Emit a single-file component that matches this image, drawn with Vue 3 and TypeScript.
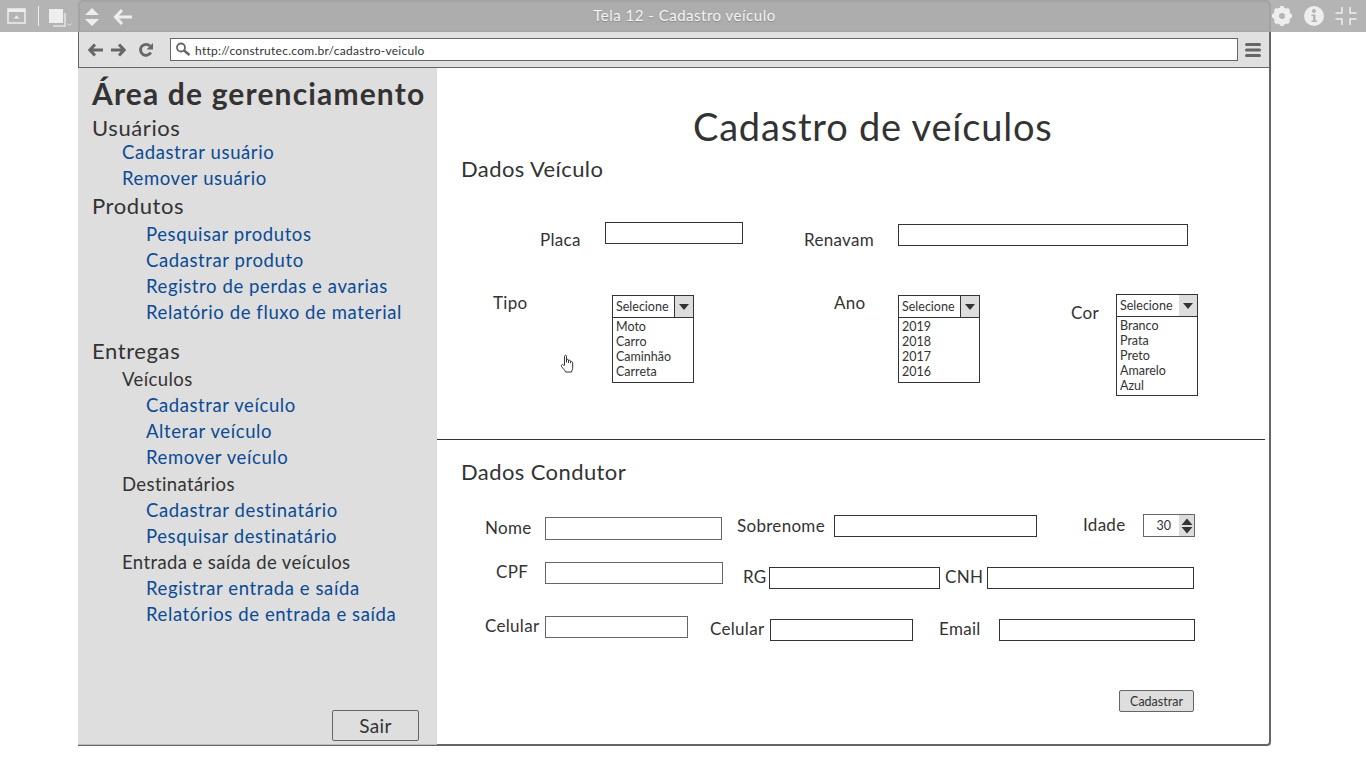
<script setup lang="ts">
const usuarios = ['Cadastrar usuário', 'Remover usuário']
const produtos = ['Pesquisar produtos', 'Cadastrar produto', 'Registro de perdas e avarias', 'Relatório de fluxo de material']
const veiculos = ['Cadastrar veículo', 'Alterar veículo', 'Remover veículo']
const destinatarios = ['Cadastrar destinatário', 'Pesquisar destinatário']
const entradas = ['Registrar entrada e saída', 'Relatórios de entrada e saída']
const tipos = ['Moto', 'Carro', 'Caminhão', 'Carreta']
const anos = ['2019', '2018', '2017', '2016']
const cores = ['Branco', 'Prata', 'Preto', 'Amarelo', 'Azul']
</script>

<template>
  <div class="screen">
    <header class="topbar">
      <div class="tools">
        <svg class="ic-win" width="20" height="16" viewBox="0 0 20 16">
          <rect x="1" y="1" width="17" height="14" fill="none" stroke="#eee" stroke-width="1.5" />
          <rect x="1" y="1" width="17" height="3" fill="#eee" />
          <path d="M6.500 10.500 9.500 7.500 12.500 10.500Z" fill="#eee" />
        </svg>
        <span class="sep" />
        <svg class="ic-layers" width="26" height="20" viewBox="0 0 26 20">
          <rect x="1" y="1" width="14" height="14" fill="#eee" />
          <path d="M17 5V18H5" fill="none" stroke="#e4e4e4" stroke-width="1.500" />
          <path d="M19.500 15.500 21.500 17.500 23.500 15.500" fill="none" stroke="#e4e4e4" stroke-width="1" />
        </svg>
      </div>
      <div class="titlebar">
        <svg class="ic-updown" width="16" height="20" viewBox="0 0 16 20">
          <path d="M8 1 15 8H1ZM8 19 1 12H15Z" fill="#eee" />
        </svg>
        <svg class="ic-back" width="20" height="18" viewBox="0 0 20 18">
          <path d="M9 2 2.500 9 9 16M3 9H19" fill="none" stroke="#eee" stroke-width="3" />
        </svg>
        <span class="wintitle">Tela 12 - Cadastro veículo</span>
      </div>
      <div class="tools-right">
        <svg width="22" height="22" viewBox="0 0 22 22">
          <circle cx="11" cy="11" r="6.500" fill="none" stroke="#eee" stroke-width="4.500" />
          <path d="M11 1V21M1 11H21M4 4 18 18M18 4 4 18" stroke="#eee" stroke-width="3.500" />
          <circle cx="11" cy="11" r="3" fill="#b4b4b4" />
        </svg>
        <svg width="22" height="22" viewBox="0 0 22 22">
          <circle cx="11" cy="11" r="10" fill="#eee" />
          <circle cx="11" cy="6" r="2" fill="#b4b4b4" />
          <path d="M8.500 9.500H12.500V15.500H14V17H8.500V15.500H10V11H8.500Z" fill="#b4b4b4" />
        </svg>
        <svg width="22" height="20" viewBox="0 0 22 20">
          <path d="M7 1V7H0.500M15 1V7H21.500M7 19V13H0.500M15 19V13H21.500" fill="none" stroke="#eee" stroke-width="1.500" />
        </svg>
      </div>
    </header>

    <div class="window">
      <div class="browserbar">
        <svg class="ic-nav" width="16" height="14" viewBox="0 0 16 14">
          <path d="M7 1.500 1.800 7 7 12.500M2.500 7H15" fill="none" stroke="#666" stroke-width="3" />
        </svg>
        <svg class="ic-nav fwd" width="16" height="14" viewBox="0 0 16 14">
          <path d="M9 1.500 14.200 7 9 12.500M13.500 7H1" fill="none" stroke="#666" stroke-width="3" />
        </svg>
        <svg class="ic-reload" width="16" height="16" viewBox="0 0 16 16">
          <path d="M12.800 10.500A5.500 5.500 0 1 1 12 4" fill="none" stroke="#666" stroke-width="2.800" />
          <path d="M15 1V7.500H8.500Z" fill="#666" />
        </svg>
        <div class="urlbox">
          <svg width="16" height="15" viewBox="0 0 16 15">
            <circle cx="6" cy="5.500" r="4" fill="none" stroke="#666" stroke-width="1.800" />
            <path d="M9 8.500 14.500 13" stroke="#666" stroke-width="2.500" />
          </svg>
          <span class="url">http://construtec.com.br/cadastro-veiculo</span>
        </div>
        <svg class="ic-menu" width="16" height="16" viewBox="0 0 16 16">
          <path d="M1.500 2.500H14.500M1.500 8H14.500M1.500 13.500H14.500" stroke="#666" stroke-width="3" stroke-linecap="round" />
        </svg>
      </div>

      <div class="content">
        <aside class="sidebar">
          <h2 class="side-title">Área de gerenciamento</h2>
          <div class="group usr">Usuários</div>
          <a v-for="u in usuarios" :key="u" class="link lvl1">{{ u }}</a>
          <div class="group prod">Produtos</div>
          <a v-for="p in produtos" :key="p" class="link lvl2">{{ p }}</a>
          <div class="group ent">Entregas</div>
          <div class="sub first">Veículos</div>
          <a v-for="v in veiculos" :key="v" class="link lvl2">{{ v }}</a>
          <div class="sub">Destinatários</div>
          <a v-for="d in destinatarios" :key="d" class="link lvl2">{{ d }}</a>
          <div class="sub last">Entrada e saída de veículos</div>
          <a v-for="e in entradas" :key="e" class="link lvl2">{{ e }}</a>
          <button class="sair">Sair</button>
        </aside>

        <main class="main">
          <h1 class="page-title">Cadastro de veículos</h1>
          <h3 class="section veic">Dados Veículo</h3>

          <div class="row r1">
            <span class="lbl placa">Placa</span>
            <span class="inp placa-i" />
            <span class="lbl renavam">Renavam</span>
            <span class="inp renavam-i" />
          </div>

          <div class="row r2">
            <span class="lbl tipo">Tipo</span>
            <div class="sel s-tipo">
              <div class="sel-head"><span>Selecione</span><i class="sel-btn" /></div>
              <div v-for="t in tipos" :key="t" class="opt">{{ t }}</div>
            </div>
            <span class="lbl ano">Ano</span>
            <div class="sel s-ano">
              <div class="sel-head"><span>Selecione</span><i class="sel-btn" /></div>
              <div v-for="a in anos" :key="a" class="opt">{{ a }}</div>
            </div>
            <span class="lbl cor">Cor</span>
            <div class="sel s-cor">
              <div class="sel-head"><span>Selecione</span><i class="sel-btn flat" /></div>
              <div v-for="c in cores" :key="c" class="opt">{{ c }}</div>
            </div>
          </div>

          <hr class="divider" />
          <h3 class="section cond">Dados Condutor</h3>

          <div class="row r3">
            <span class="lbl nome">Nome</span>
            <span class="inp soft nome-i" />
            <span class="lbl sobrenome">Sobrenome</span>
            <span class="inp sobrenome-i" />
            <span class="lbl idade">Idade</span>
            <div class="spin"><span class="spin-val">30</span>
              <i class="spin-btn">
                <svg width="12" height="18" viewBox="0 0 12 18"><path d="M6 1.500 11.500 8H.5ZM6 16.500 .5 10H11.500Z" fill="#333" /></svg>
              </i>
            </div>
          </div>

          <div class="row r4">
            <span class="lbl cpf">CPF</span>
            <span class="inp soft cpf-i" />
            <span class="lbl rg">RG</span>
            <span class="inp rg-i" />
            <span class="lbl cnh">CNH</span>
            <span class="inp cnh-i" />
          </div>

          <div class="row r5">
            <span class="lbl cel1">Celular</span>
            <span class="inp soft cel1-i" />
            <span class="lbl cel2">Celular</span>
            <span class="inp cel2-i" />
            <span class="lbl email">Email</span>
            <span class="inp email-i" />
          </div>

          <div class="actions"><button class="cadastrar">Cadastrar</button></div>

          <svg class="hand" width="16" height="20" viewBox="0 0 16 20">
            <path d="M4.500 11V2.500C4.500 .8 6.500 .8 6.500 2.500V8.500M6.500 8V6.500C6.500 5 8.500 5 8.500 6.500V9M8.500 8V7C8.500 5.800 10.500 5.800 10.500 7.200V9.200M10.500 8.500C10.500 7 12.700 7.200 12.700 8.700V13C12.700 15.500 12 16.500 11.500 18H5.500C4.800 16 3 14.500 1.500 12.500 .7 11 2.500 9.800 3.500 11L4.500 12" fill="#fff" stroke="#333" stroke-width="1" />
          </svg>
        </main>
      </div>
    </div>
  </div>
</template>

<style>
html, body { margin: 0; background: #fff; }
</style>

<style scoped>
.screen {
  position: relative;
  width: 1366px;
  height: 768px;
  overflow: hidden;
  background: #fff;
  font-family: "Lato", "Noto Sans", sans-serif;
  color: #333;
}

/* top chrome */
.topbar {
  display: flex;
  height: 32px;
  background: #b4b4b4;
}
.tools {
  display: flex;
  align-items: center;
  width: 78px;
  flex: none;
  box-sizing: border-box;
  padding-left: 7px;
}
.sep { width: 1px; height: 20px; margin: 0 9px 0 11px; background: #eee; flex: none; }
.ic-layers { flex: none; margin-top: 3px; }
.titlebar {
  position: relative;
  display: flex;
  align-items: center;
  width: 1193px;
  flex: none;
  box-sizing: border-box;
  padding-left: 4px;
  background: #adadad;
  border-top: 2px solid #a4a4a4;
  border-left: 2px solid #a4a4a4;
  border-right: 2px solid #a4a4a4;
  border-bottom: 1px solid #a4a4a4;
  border-radius: 5px 5px 0 0;
}
.ic-back { margin-left: 13px; }
.wintitle {
  position: absolute;
  left: 20px;
  right: 0;
  top: 4px;
  text-align: center;
  color: #f4f4f4;
  font-size: 15px;
  letter-spacing: .5px;
  text-shadow: 0 1px 1px #888;
}
.tools-right {
  display: flex;
  align-items: center;
  gap: 10px;
}

/* browser */
.window {
  width: 1193px;
  height: 714px;
  margin-left: 78px;
  box-sizing: border-box;
  border-left: 1px solid #666;
  border-right: 2px solid #666;
  border-bottom: 2px solid #666;
  border-radius: 0 0 4px 0;
}
.browserbar {
  display: flex;
  align-items: center;
  height: 36px;
  box-sizing: border-box;
  padding-left: 9px;
  background: #e0e0e0;
  border-bottom: 1px solid #666;
}
.ic-nav.fwd { margin-left: 6px; }
.ic-reload { margin-left: 12px; }
.urlbox {
  display: flex;
  align-items: center;
  gap: 4px;
  width: 1068px;
  height: 23px;
  margin-left: 16px;
  box-sizing: border-box;
  padding-left: 4px;
  background: #fff;
  border: 1px solid #666;
}
.url { font-size: 12px; letter-spacing: .27px; margin-top: 1px; color: #333; }
.ic-menu { margin-left: 7px; }

.content { display: flex; height: 676px; margin-left: -1px; }

/* sidebar */
.sidebar {
  position: relative;
  width: 359px;
  flex: none;
  box-sizing: border-box;
  padding: 7px 0 0 14px;
  background: #dedede;
  border-bottom: 1px solid #bbb;
  margin-bottom: -1px;
}
.side-title {
  margin: 0;
  font-size: 30px;
  line-height: 36px;
  font-weight: 700;
  letter-spacing: 1.15px;
  color: #333;
  white-space: nowrap;
}
.group { font-size: 22px; line-height: 28px; letter-spacing: .6px; }
.group.usr { margin: 3px 0 -3px; }
.group.prod { margin: 1px 0 1px; }
.group.ent { margin-top: 12px; }
.link {
  display: block;
  font-size: 18.500px;
  line-height: 26px;
  letter-spacing: .6px;
  color: #0b4a94;
  white-space: nowrap;
}
.lvl1 { padding-left: 30px; }
.lvl2 { padding-left: 54px; }
.sub { font-size: 18.500px; line-height: 26px; letter-spacing: .4px; padding-left: 30px; margin-top: 1px; }
.sub.first { margin-top: 1px; }
.sub.last { margin-top: 0; }
.sair {
  position: absolute;
  right: 18px;
  bottom: 3px;
  width: 87px;
  height: 31px;
  background: #dedede;
  border: 1px solid #666;
  border-radius: 2px;
  font: 19px "Lato", sans-serif;
  letter-spacing: .4px;
  color: #333;
}

/* main */
.main { position: relative; flex: 1; min-width: 0; }
.page-title {
  margin: 35px 0 0 256px;
  font-size: 38px;
  line-height: 46px;
  font-weight: 400;
  letter-spacing: .8px;
  white-space: nowrap;
  color: #333;
}
.section {
  margin: 0 0 0 24px;
  font-size: 22px;
  line-height: 28px;
  font-weight: 400;
  letter-spacing: .4px;
  color: #333;
}
.section.veic { margin-top: 6px; }
.section.cond { margin-top: 18px; }
.row { display: flex; align-items: flex-start; }
.lbl { font-size: 17px; line-height: 20px; letter-spacing: .3px; white-space: nowrap; flex: none; }
.inp {
  display: block;
  flex: none;
  height: 22px;
  box-sizing: border-box;
  background: #fff;
  border: 1px solid #333;
}
.inp.soft { border-color: #666; }

.r1 { height: 72px; margin-top: 39px; }
.placa { width: 65px; margin: 8px 0 0 103px; }
.placa-i { width: 138px; }
.renavam { width: 94px; margin: 8px 0 0 61px; }
.renavam-i { width: 290px; margin-top: 2px; }

.r2 { height: 145px; }
.tipo { width: 119px; margin: -1px 0 0 56px; }
.ano { width: 64px; margin: -1px 0 0 140px; }
.cor { width: 45px; margin: 9px 0 0 91px; }
.sel {
  flex: none;
  width: 82px;
  box-sizing: border-box;
  background: #fff;
  border: 1px solid #333;
  font-size: 12.500px;
  line-height: 15px;
  padding-bottom: 3px;
  margin-top: 1px;
}
.s-cor { margin-top: 0; padding-bottom: 2px; }
.sel-head {
  display: flex;
  justify-content: space-between;
  align-items: center;
  height: 21px;
  margin-bottom: 1px;
  padding-left: 3px;
  border-bottom: 1px solid #333;
}
.sel-btn {
  position: relative;
  width: 18px;
  height: 21px;
  background: #ddd;
  border-left: 1px solid #333;
}
.sel-btn.flat { border-left: 0; }
.sel-btn::after {
  content: "";
  position: absolute;
  left: 4px;
  top: 8px;
  border: 5px solid transparent;
  border-top: 6px solid #333;
  border-bottom: 0;
}
.opt { padding-left: 3px; }

.divider { margin: 0 4px 0 0; border: 0; border-top: 1px solid #333; }

.r3 { height: 48px; margin-top: 28px; }
.nome { width: 60px; margin: 4px 0 0 48px; }
.nome-i { width: 177px; margin-top: 3px; height: 23px; }
.sobrenome { width: 97px; margin: 2px 0 0 15px; }
.sobrenome-i { width: 203px; margin-top: 1px; }
.idade { width: 60px; margin: 1px 0 0 46px; }
.spin {
  display: flex;
  justify-content: flex-end;
  align-items: center;
  width: 52px;
  height: 23px;
  box-sizing: border-box;
  border: 1px solid #666;
  font-size: 12.500px;
}
.spin-val { margin-right: 8px; }
.spin-btn {
  display: flex;
  align-items: center;
  justify-content: center;
  width: 15px;
  height: 21px;
  background: #ddd;
}

.r4 { height: 54px; }
.cpf { width: 49px; margin: 0 0 0 59px; }
.cpf-i { width: 178px; }
.rg { width: 26px; margin: 5px 0 0 20px; }
.rg-i { width: 171px; margin-top: 5px; }
.cnh { width: 42px; margin: 5px 0 0 5px; }
.cnh-i { width: 207px; margin-top: 5px; }

.r5 { height: 74px; }
.cel1 { width: 60px; margin: 0 0 0 48px; }
.cel1-i { width: 143px; }
.cel2 { width: 60px; margin: 3px 0 0 22px; }
.cel2-i { width: 143px; margin-top: 3px; }
.email { width: 60px; margin: 3px 0 0 26px; }
.email-i { width: 196px; margin-top: 3px; }

.actions { margin-left: 682px; }
.cadastrar {
  display: block;
  width: 75px;
  height: 22px;
  padding: 0;
  background: #dedede;
  border: 1px solid #666;
  border-radius: 2px;
  font: 12.500px "Lato", sans-serif;
  color: #333;
}
.hand { position: absolute; left: 123px; top: 286px; }
</style>
